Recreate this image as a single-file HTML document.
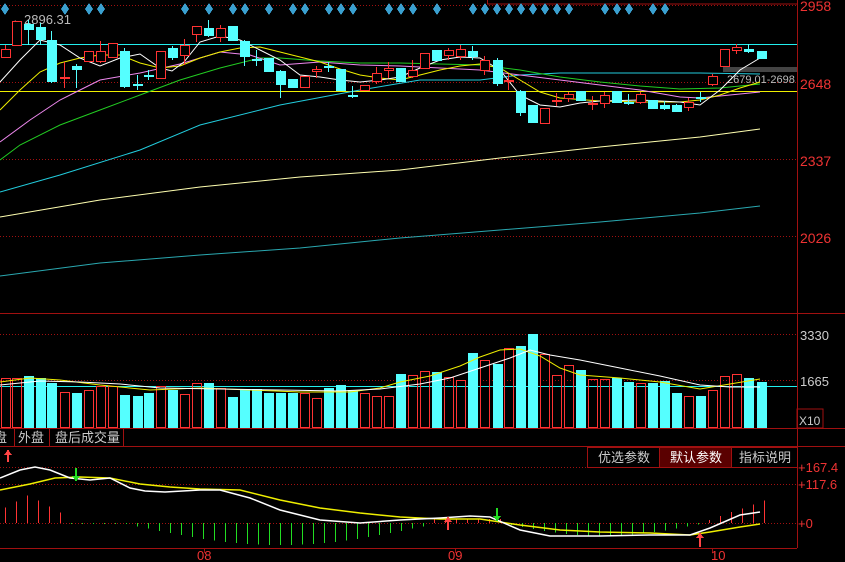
<!DOCTYPE html>
<html><head><meta charset="utf-8"><style>
html,body{margin:0;padding:0;background:#000;overflow:hidden}
svg{display:block}
text{font-family:"Liberation Sans","Noto Sans CJK SC",sans-serif}
</style></head><body>
<svg id="s" width="845" height="562" viewBox="0 0 845 562" xmlns="http://www.w3.org/2000/svg" shape-rendering="crispEdges">
<rect width="845" height="562" fill="#000"/>
<g stroke="#a01010" stroke-dasharray="1,2" stroke-width="1">
<line x1="0" y1="5.5" x2="797" y2="5.5"/><line x1="0" y1="82.5" x2="797" y2="82.5"/>
<line x1="0" y1="159.5" x2="797" y2="159.5"/><line x1="0" y1="236.5" x2="797" y2="236.5"/>
<line x1="0" y1="334.5" x2="797" y2="334.5"/><line x1="0" y1="380.5" x2="797" y2="380.5"/>
<line x1="0" y1="467.5" x2="797" y2="467.5"/><line x1="0" y1="484.5" x2="797" y2="484.5"/>
<line x1="0" y1="523.5" x2="797" y2="523.5"/>
</g>
<g stroke="#a01010" stroke-width="1" fill="none">
<line x1="797.5" y1="0" x2="797.5" y2="548"/>
<line x1="0" y1="313.5" x2="845" y2="313.5"/>
<line x1="0" y1="428.5" x2="845" y2="428.5"/>
<line x1="0" y1="446.5" x2="845" y2="446.5"/>
<line x1="0" y1="548.5" x2="797" y2="548.5"/>
<rect x="487.5" y="-1" width="310" height="5"/>
<line x1="14.5" y1="428" x2="14.5" y2="446"/><line x1="49.5" y1="428" x2="49.5" y2="446"/><line x1="123.5" y1="428" x2="123.5" y2="446"/>
<line x1="204.5" y1="548" x2="204.5" y2="553"/><line x1="455.5" y1="548" x2="455.5" y2="553"/><line x1="712.5" y1="548" x2="712.5" y2="553"/>
</g>
<rect x="797" y="409" width="26" height="19" fill="none" stroke="#a01010"/>
<g fill="#e33" font-size="14">
<text x="800" y="11">2958</text><text x="800" y="89">2648</text><text x="800" y="166">2337</text><text x="800" y="243">2026</text>
<text x="800" y="340" fill="#ccc" font-size="13">3330</text><text x="800" y="386" fill="#ccc" font-size="13">1665</text>
<text x="799" y="425" fill="#ccc" font-size="12">X10</text>
<text x="798" y="472" font-size="13">+167.4</text><text x="798" y="489" font-size="13">+117.6</text><text x="798" y="528" font-size="13">+0</text>
<text x="197" y="560" font-size="13">08</text><text x="448" y="560" font-size="13">09</text><text x="711" y="560" font-size="13">10</text>
</g>
<g fill="#ccc" font-size="13">
<text x="-6" y="442">盘</text><text x="18" y="442">外盘</text><text x="55" y="442">盘后成交量</text>
</g>
<rect x="587.5" y="447.5" width="72" height="20" fill="#000" stroke="#a01010"/>
<rect x="659.5" y="447.5" width="72" height="20" fill="#5a0000" stroke="#a01010"/>
<rect x="731.5" y="447.5" width="66" height="20" fill="#000" stroke="#a01010"/>
<g font-size="13" fill="#ccc"><text x="598" y="462">优选参数</text><text x="670" y="462" fill="#fff">默认参数</text><text x="739" y="462">指标说明</text></g>
<line x1="0" y1="44.5" x2="797" y2="44.5" stroke="#2ee" />
<line x1="0" y1="91.5" x2="797" y2="91.5" stroke="#ee0"/>
<rect x="723" y="67" width="74" height="5" fill="#444"/>
<text x="727" y="83" fill="#bbb" font-size="11">2679.01-2698</text>
<text x="11" y="24" fill="#bbb" font-size="13">←2896.31</text>
<line x1="0" y1="386.5" x2="797" y2="386.5" stroke="#2ee"/>
<g id="dyn"></g>
</svg>
<script>
var NS="http://www.w3.org/2000/svg",g=document.getElementById('dyn');
function el(t,a){var e=document.createElementNS(NS,t);for(var k in a)e.setAttribute(k,a[k]);g.appendChild(e);return e}
function pl(pts,c,w){el('polyline',{points:pts,fill:'none',stroke:c,'stroke-width':w||1,'shape-rendering':'auto'})}
[5,65,89,101,185,209,233,245,269,293,305,329,341,353,389,401,413,437,473,485,497,509,521,533,545,557,569,605,617,629,653,665].forEach(function(x){el('polygon',{points:(x)+',3 '+(x+4)+',9 '+x+',15 '+(x-4)+',9',fill:'#3aa0d0'})});
pl("0,276 100,263 200,255 300,248 400,238 500,230 600,222 700,213 760,206","#2aa8b0");
pl("0,217 100,200 200,187 300,177 400,170 500,158 600,147 700,137 760,129","#ffffb0");
pl("0,192 60,175 140,150 200,125 280,105 360,90 420,80 480,80 520,75 560,73 640,73 700,73 760,74","#2cd");
pl("0,160 20,145 60,125 100,110 140,95 180,80 220,68 260,58 280,58 320,61 360,63 400,63 440,64 480,65 520,70 560,77 600,82 640,86 680,89 720,88 760,84","#2c2");
pl("0,142 30,120 60,100 80,90 100,80 140,73 180,64 220,52 250,55 280,65 320,62 360,65 400,66 440,68 480,70 520,75 560,80 600,85 640,90 680,97 700,98 730,95 760,92","#e8e");
pl("0,110 20,90 40,72 60,63 80,58 100,55 120,55 140,63 160,68 180,66 200,58 220,52 240,48 260,47 280,52 300,57 320,62 340,69 360,75 380,78 400,80 420,75 440,70 460,66 480,64 500,68 520,80 540,92 560,98 600,101 640,102 680,102 700,100 720,95 740,88 760,82","#ee0");
pl("0,82 20,60 40,40 60,45 80,58 100,66 120,58 140,54 160,68 172,71 184,62 200,42 220,36 240,40 260,50 280,60 300,75 320,77 340,80 360,82 380,80 400,77 420,68 440,60 460,57 480,58 500,70 520,95 540,105 560,107 580,103 600,101 640,100 680,102 700,105 720,90 740,70 760,58","#fff");
var C=[[5,'r',49,57,45,58],[16,'r',21,45],[28,'c',24,29,20,45],[40,'c',27,39,23,45],[51,'c',40,81,31,83],[64,'r',77,78,62,88],[76,'c',66,69,64,88],[88,'r',51,61],[100,'r',51,61,41,63],[112,'r',43,57],[124,'c',51,86,48,88],[137,'c',84,85,75,90],[148,'c',75,76,70,80],[160,'r',51,78],[172,'c',48,57,46,60],[184,'r',45,55,39,65],[196,'r',26,34,26,42],[208,'c',28,35,20,37],[220,'r',28,37,25,42],[232,'c',26,40],[244,'c',41,56,40,66],[256,'c',59,60,50,66],[268,'c',58,71],[280,'c',71,84,70,98],[292,'c',79,87],[304,'r',76,87],[316,'r',69,71,66,78],[328,'c',66,67,62,72],[340,'c',69,90],[352,'c',95,96,86,98],[364,'r',85,90],[376,'r',73,81,67,84],[388,'r',68,70,62,78],[400,'c',68,81],[412,'r',70,76,60,78],[424,'r',53,68],[436,'c',50,60],[448,'r',50,55,48,60],[460,'r',49,56,45,60],[472,'c',51,56,46,60],[484,'r',60,70,56,75],[497,'c',60,83,58,86],[508,'r',80,81,74,90],[520,'c',91,112,90,116],[532,'c',105,122],[544,'r',108,123],[556,'r',100,101,93,106],[568,'r',94,98,92,102],[580,'c',91,100],[592,'r',103,104,96,110],[604,'r',95,103,92,108],[616,'c',91,102],[628,'c',102,103,94,105],[640,'r',94,102,92,104],[652,'c',100,108],[664,'c',105,108,101,110],[676,'c',105,111,104,112],[688,'r',102,107,98,111],[700,'c',97,98,92,102],[712,'r',76,84,74,86],[724,'r',49,66],[736,'r',47,50,44,54],[748,'c',49,51,44,53],[761,'c',51,58]];
var V=[378,378,376,378,383,392,393,390,386,386,395,396,393,386,390,394,383,383,388,397,389,389,393,393,393,393,398,388,385,390,393,396,396,374,375,371,372,377,380,353,360,364,348,346,334,354,375,365,370,379,379,378,382,383,383,381,393,396,396,390,376,374,378,382];
C.forEach(function(c,i){var col=c[1]=='r'?'#f33':'#5ff',x=c[0];
 var wt=c[4]||c[2],wb=c[5]||c[3];
 el('line',{x1:x+.5,y1:wt,x2:x+.5,y2:wb,stroke:col});
 if(c[1]=='r')el('rect',{x:x-4+.5,y:c[2]+.5,width:9,height:Math.max(1,c[3]-c[2]),fill:'#000',stroke:col});
 else el('rect',{x:x-4,y:c[2],width:10,height:Math.max(1,c[3]-c[2]+1),fill:col});
 var t=V[i];
 if(c[1]=='r')el('rect',{x:x-4+.5,y:t+.5,width:9,height:428-t-1,fill:'none',stroke:col});
 else el('rect',{x:x-4,y:t,width:10,height:428-t,fill:col});
});
pl("0,382 30,378 60,380 100,385 150,390 200,388 250,390 300,392 350,392 380,388 400,382 430,376 460,366 480,357 500,350 520,349 540,356 560,368 580,375 620,378 660,382 700,389 730,384 760,379","#ee0");
pl("0,385 40,381 80,382 120,384 160,388 220,389 280,390 340,391 380,389 420,384 450,378 480,368 510,358 530,350 550,355 580,360 620,368 660,376 700,385 730,387 760,387","#fff");
for(var x=5;x<=765;x+=11){var d=0;
 if(x<70)d=-(28-Math.abs(x-28)*0.55);else if(x<130)d=0;else if(x<430)d=20*Math.sin((x-130)/300*Math.PI)+2;else if(x<505)d=-4;else if(x<700)d=12*Math.sin((x-505)/195*Math.PI)+1;else d=-(x-700)*0.35;
 if(Math.abs(d)<1)d=d<0?-1:1;
 el('line',{x1:x+.5,y1:523,x2:x+.5,y2:523+d,stroke:d<0?'#f33':'#2d2'});}
pl("0,490 30,484 55,478 80,477 110,478 140,484 170,487 200,489 240,490 280,500 320,508 360,513 400,517 440,519 480,519 520,525 560,530 600,532 650,533 690,535 710,532 740,527 760,524","#ee0",1.5);
pl("0,478 20,470 35,467 50,470 70,478 90,480 110,478 130,488 145,491 165,492 200,490 220,490 250,498 280,510 320,520 360,523 400,520 440,518 470,516 490,517 520,530 550,536 600,536 650,535 690,535 710,528 740,515 760,512","#fff",1.5);
function arr(x,y1,y2,c){el('line',{x1:x,y1:y1,x2:x,y2:y2,stroke:c,'stroke-width':2});var d=y2>y1?1:-1;el('polygon',{points:(x-4)+','+(y2-5*d)+' '+(x+4)+','+(y2-5*d)+' '+x+','+y2,fill:c})}
arr(76,468,481,'#2d2');arr(497,508,521,'#2d2');arr(448,530,517,'#f44');arr(700,547,533,'#f44');arr(8,462,450,'#f44');
</script>
</body></html>
